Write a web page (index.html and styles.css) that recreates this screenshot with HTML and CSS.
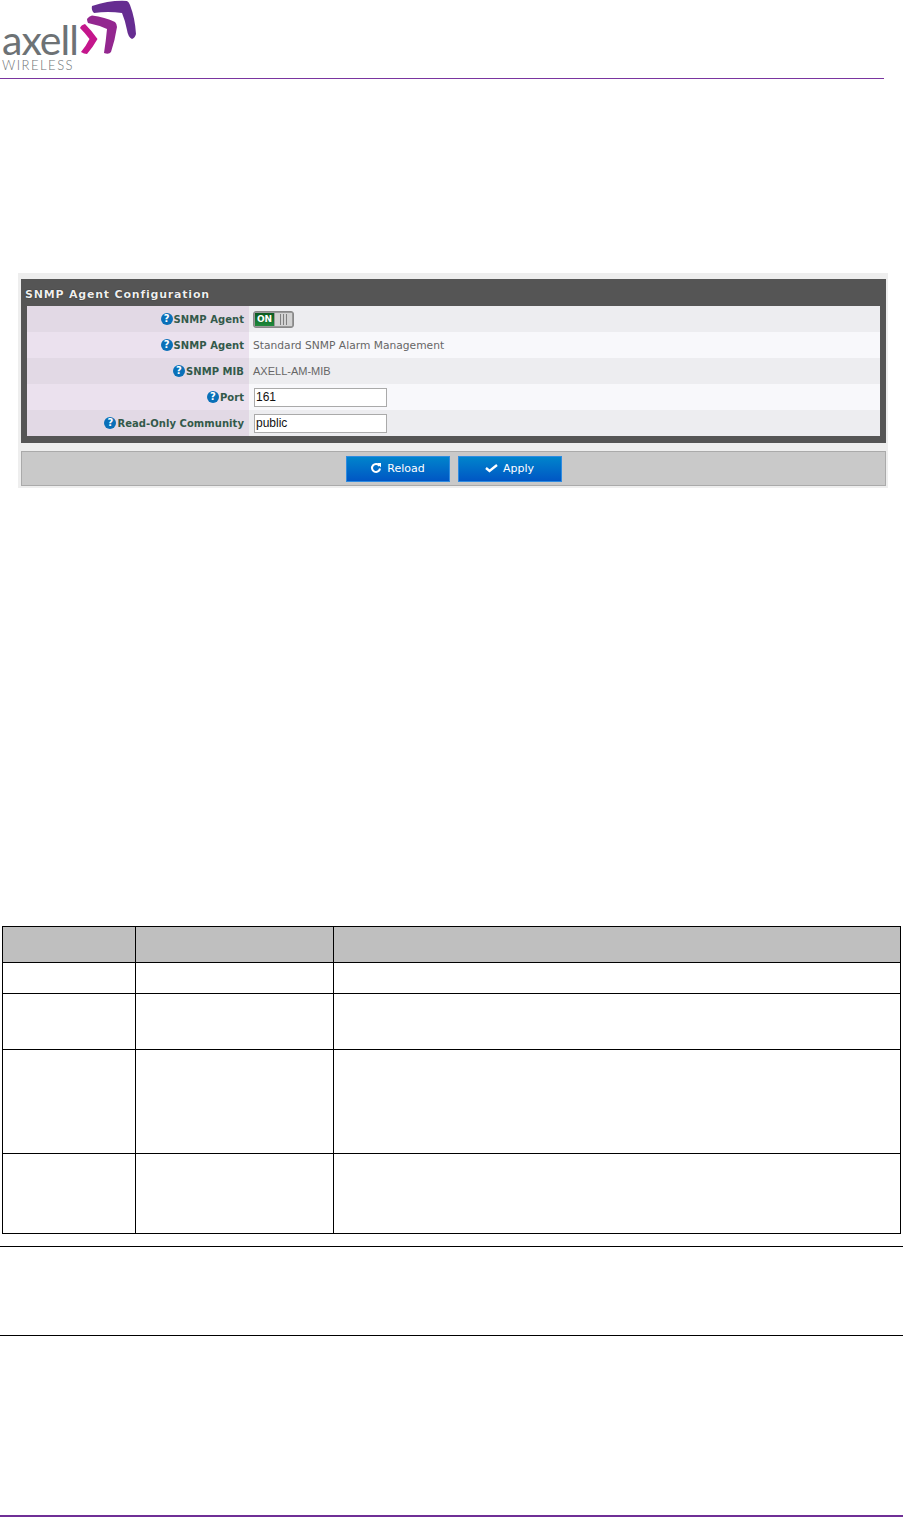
FILE: index.html
```html
<!DOCTYPE html>
<html lang="en">
<head>
    <meta charset="UTF-8">
    <meta name="viewport" content="width=device-width, initial-scale=1.0">
    <title>SNMP Agent Configuration</title>
    <link rel="stylesheet" href="styles.css">
</head>
<body>
    <header class="page-header">
        <div class="logo">
            <div class="logo-text">
                <span class="logo-name">axell</span>
                <span class="logo-sub">WIRELESS</span>
            </div>
            <svg class="logo-mark" width="62" height="60" viewBox="75 0 62 60">
                <path fill="#c4168c" d="M80 28 Q81 25 85 24 Q92 31 97.5 39 Q93 47 87 54 Q84 54 81 52 Q86 46 89.5 39 Q85 33 80 28Z"/>
                <path fill="#93278f" d="M87 19 Q89 16 92 15.5 Q105 17 115 22 Q117 24 117 27 Q115 40 111 52 Q109 55 104 53 Q106 40 107 29 Q98 25 88 23 Q87 21 87 19Z"/>
                <path fill="#662d91" d="M92 6 Q110 0 127 1 Q129 2 130 5 Q135 18 136 34 Q135 38 132 39 Q128 37 127 30 Q125 20 122 13 Q108 11 94 13 Q91 10 92 6Z"/>
            </svg>
        </div>
    </header>

    <section class="screenshot">
        <div class="panel">
            <h3 class="panel-title">SNMP Agent Configuration</h3>
            <div class="form-row">
                <div class="form-label"><span class="help">?</span>SNMP Agent</div>
                <div class="form-value">
                    <div class="toggle">
                        <span class="toggle-on">ON</span>
                        <span class="toggle-grip"><i></i><i></i><i></i></span>
                    </div>
                </div>
            </div>
            <div class="form-row">
                <div class="form-label"><span class="help">?</span>SNMP Agent</div>
                <div class="form-value">Standard SNMP Alarm Management</div>
            </div>
            <div class="form-row">
                <div class="form-label"><span class="help">?</span>SNMP MIB</div>
                <div class="form-value mib">AXELL-AM-MIB</div>
            </div>
            <div class="form-row">
                <div class="form-label"><span class="help">?</span>Port</div>
                <div class="form-value"><input class="field" type="text" value="161"></div>
            </div>
            <div class="form-row">
                <div class="form-label"><span class="help">?</span>Read-Only Community</div>
                <div class="form-value"><input class="field" type="text" value="public"></div>
            </div>
        </div>
        <div class="button-bar">
            <button class="blue-button" type="button">
                <svg width="12" height="12" viewBox="0 0 12 12"><path fill="none" stroke="#fff" stroke-width="2" d="M9.5 4 A4 4 0 1 0 10 6.5"/><path fill="#fff" d="M7 1 L11 1 L11 5.5Z"/></svg>
                <span>Reload</span>
            </button>
            <button class="blue-button" type="button">
                <svg width="13" height="10" viewBox="0 0 13 10"><path fill="none" stroke="#fff" stroke-width="2.4" d="M1 5 L4.5 8 L12 2"/></svg>
                <span>Apply</span>
            </button>
        </div>
    </section>

    <table class="doc-table">
        <colgroup>
            <col class="col-a">
            <col class="col-b">
            <col>
        </colgroup>
        <tr class="head-row"><th></th><th></th><th></th></tr>
        <tr class="row-1"><td></td><td></td><td></td></tr>
        <tr class="row-2"><td></td><td></td><td></td></tr>
        <tr class="row-3"><td></td><td></td><td></td></tr>
        <tr class="row-4"><td></td><td></td><td></td></tr>
    </table>

    <div class="note"></div>

    <footer class="page-footer"></footer>
</body>
</html>
```

FILE: styles.css
```css
html, body {
    margin: 0;
    padding: 0;
    background-color: #fff;
}
body {
    height: 1517px;
    overflow: hidden;
    font-family: "DejaVu Sans", Verdana, sans-serif;
}

/* header */
.page-header {
    height: 78px;
    width: 884px;
    border-bottom: 1px solid #7a35a0;
}
.logo {
    display: flex;
    align-items: flex-start;
    height: 78px;
}
.logo-text {
    width: 75px;
    padding: 22px 0 0 2px;
    color: #6d7275;
}
.logo-name {
    display: block;
    font-family: "Lato", sans-serif;
    font-size: 41px;
    line-height: 35px;
    letter-spacing: -1px;
}
.logo-sub {
    display: block;
    margin-top: 1px;
    font-family: "Lato", sans-serif;
    font-weight: 300;
    font-size: 13px;
    line-height: 15px;
    letter-spacing: 1.5px;
    white-space: nowrap;
}
.logo-mark {
    flex: none;
    margin-left: -2px;
}

/* screenshot of the web form */
.screenshot {
    width: 865px;
    margin: 194px 0 0 18px;
    padding: 6px 2px 2px 3px;
    background-color: #eee;
}
.panel {
    background-color: #555;
    padding: 0 6px 7px;
}
.panel-title {
    margin: 0 0 0 -2px;
    height: 27px;
    line-height: 31px;
    font-size: 11px;
    font-weight: bold;
    letter-spacing: 0.8px;
    color: #eee;
    text-shadow: 0 0 1px #000;
}
.form-row {
    display: flex;
    height: 26px;
}
.form-label {
    width: 217px;
    padding-right: 5px;
    display: flex;
    align-items: center;
    justify-content: flex-end;
    font-size: 10px;
    font-weight: bold;
    letter-spacing: 0.05px;
    color: #33594a;
    background-color: #e2d9e5;
}
.form-value {
    flex: 1;
    display: flex;
    align-items: center;
    padding-left: 4px;
    font-size: 10.7px;
    color: #666;
    background-color: #ededf0;
}
.form-row:nth-child(odd) .form-label {
    background-color: #ebe1ee;
}
.form-row:nth-child(odd) .form-value {
    background-color: #f8f8fb;
}
.mib {
    font-family: "Liberation Sans", Arial, sans-serif;
    font-size: 11px;
}
.help {
    width: 12px;
    height: 12px;
    margin-right: 1px;
    border-radius: 50%;
    background-color: #0a70b8;
    color: #fff;
    font-size: 10px;
    line-height: 12px;
    text-align: center;
}
.field {
    box-sizing: border-box;
    width: 133px;
    height: 19px;
    margin: 0 0 0 1px;
    padding: 0 1px;
    border: 1px solid #aaa;
    background-color: #fff;
    color: #111;
    font-family: "Liberation Sans", Arial, sans-serif;
    font-size: 12px;
}
.toggle {
    display: flex;
    gap: 1px;
    box-sizing: border-box;
    width: 41px;
    height: 17px;
    padding: 1px;
    border: 1px solid #888;
    border-radius: 3px;
    background-color: #999;
}
.toggle-on {
    width: 19px;
    background: linear-gradient(#0a5a20, #1f8a3c);
    color: #fff;
    font-size: 9px;
    font-weight: bold;
    line-height: 13px;
    text-align: center;
}
.toggle-grip {
    flex: 1;
    display: flex;
    justify-content: center;
    gap: 2px;
    padding: 1px 0;
    background-color: #d2d2d2;
}
.toggle-grip i {
    width: 1px;
    background-color: #808080;
}

.button-bar {
    display: flex;
    justify-content: center;
    gap: 8px;
    box-sizing: border-box;
    height: 35px;
    margin-top: 8px;
    padding: 4px 0 0 0;
    border: 1px solid #aaa;
    background-color: #c9c9c9;
}
.blue-button {
    display: flex;
    align-items: center;
    justify-content: center;
    gap: 5px;
    box-sizing: border-box;
    width: 104px;
    height: 26px;
    padding: 0 0 2px;
    border: 1px solid #2f8be0;
    background: linear-gradient(#0084cc, #0056c4);
    color: #fff;
    font-family: inherit;
    font-size: 11px;
}

/* empty table of the document */
.doc-table {
    width: 899px;
    margin: 438px 0 0 2px;
    border-collapse: collapse;
    table-layout: fixed;
}
.doc-table th, .doc-table td {
    padding: 0;
    border: 1px solid #000;
}
.doc-table th {
    background-color: #bfbfbf;
}
.col-a {
    width: 133px;
}
.col-b {
    width: 198px;
}
.head-row {
    height: 36px;
}
.row-1 {
    height: 31px;
}
.row-2 {
    height: 56px;
}
.row-3 {
    height: 104px;
}
.row-4 {
    height: 80px;
}

.note {
    height: 88px;
    margin-top: 12px;
    border-top: 1px solid #000;
    border-bottom: 1px solid #000;
}

.page-footer {
    height: 2px;
    margin-top: 179px;
    background-color: #6f2f96;
}
```
